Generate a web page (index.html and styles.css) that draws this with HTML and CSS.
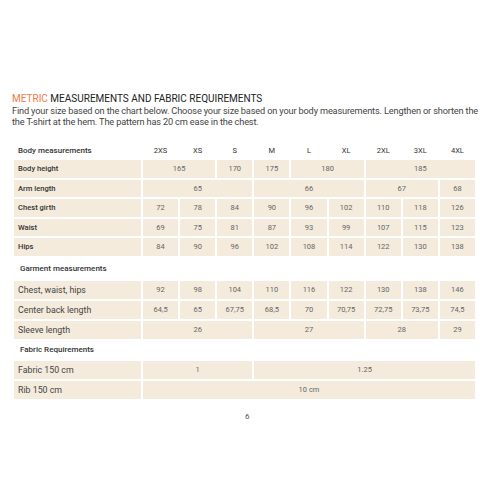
FILE: index.html
```html
<!DOCTYPE html>
<html lang="en">
<head>
  <meta charset="UTF-8">
  <title>Metric measurements</title>
  <link rel="stylesheet" href="styles.css">
</head>
<body>
  <div class="page">
    <h1 class="title"><span class="accent">METRIC</span> MEASUREMENTS AND FABRIC REQUIREMENTS</h1>
    <p class="intro">Find your size based on the chart below. Choose your size based on your body measurements. Lengthen or shorten the the T-shirt at the hem. The pattern has 20 cm ease in the chest.</p>

    <!-- Size header -->
    <div class="chart head">
      <div class="head-label">Body measurements</div>
      <div class="size">2XS</div>
      <div class="size">XS</div>
      <div class="size">S</div>
      <div class="size">M</div>
      <div class="size">L</div>
      <div class="size">XL</div>
      <div class="size">2XL</div>
      <div class="size">3XL</div>
      <div class="size">4XL</div>
    </div>

    <!-- Body measurements -->
    <div class="chart body-rows">
      <div class="label bold">Body height</div>
      <div class="val span2">165</div>
      <div class="val">170</div>
      <div class="val">175</div>
      <div class="val span2">180</div>
      <div class="val span3">185</div>

      <div class="label bold">Arm length</div>
      <div class="val span3">65</div>
      <div class="val span3">66</div>
      <div class="val span2">67</div>
      <div class="val">68</div>

      <div class="label bold">Chest girth</div>
      <div class="val">72</div><div class="val">78</div><div class="val">84</div>
      <div class="val">90</div><div class="val">96</div><div class="val">102</div>
      <div class="val">110</div><div class="val">118</div><div class="val">126</div>

      <div class="label bold">Waist</div>
      <div class="val">69</div><div class="val">75</div><div class="val">81</div>
      <div class="val">87</div><div class="val">93</div><div class="val">99</div>
      <div class="val">107</div><div class="val">115</div><div class="val">123</div>

      <div class="label bold">Hips</div>
      <div class="val">84</div><div class="val">90</div><div class="val">96</div>
      <div class="val">102</div><div class="val">108</div><div class="val">114</div>
      <div class="val">122</div><div class="val">130</div><div class="val">138</div>
    </div>

    <!-- Garment measurements -->
    <div class="section-title garment">Garment measurements</div>
    <div class="chart">
      <div class="label">Chest, waist, hips</div>
      <div class="val">92</div><div class="val">98</div><div class="val">104</div>
      <div class="val">110</div><div class="val">116</div><div class="val">122</div>
      <div class="val">130</div><div class="val">138</div><div class="val">146</div>

      <div class="label">Center back length</div>
      <div class="val">64,5</div><div class="val">65</div><div class="val">67,75</div>
      <div class="val">68,5</div><div class="val">70</div><div class="val">70,75</div>
      <div class="val">72,75</div><div class="val">73,75</div><div class="val">74,5</div>

      <div class="label">Sleeve length</div>
      <div class="val span3">26</div>
      <div class="val span3">27</div>
      <div class="val span2">28</div>
      <div class="val">29</div>
    </div>

    <!-- Fabric requirements -->
    <div class="section-title">Fabric Requirements</div>
    <div class="chart">
      <div class="label">Fabric 150 cm</div>
      <div class="val span3">1</div>
      <div class="val span6">1.25</div>

      <div class="label">Rib 150 cm</div>
      <div class="val span9">10 cm</div>
    </div>

    <div class="page-num">6</div>
  </div>
</body>
</html>
```

FILE: styles.css
```css
body {
  margin: 0;
  background: #fff;
  font-family: Roboto, "Liberation Sans", sans-serif;
  color: #333;
}

.page {
  padding: 93px 25px 0 14px;
}

.title {
  margin: 0 0 0 -2px;
  font-size: 10px;
  font-weight: 400;
  line-height: 12px;
  color: #222;
}

.accent {
  color: #ef7a47;
}

.intro {
  margin: 0 -8px 0 -2px;
  font-size: 9.2px;
  line-height: 11px;
  letter-spacing: -0.15px;
  color: #444;
}

.chart {
  display: grid;
  grid-template-columns: 127px repeat(9, 1fr);
  grid-auto-rows: 18px;
  gap: 2px;
  width: 461px;
}

.chart.head {
  grid-auto-rows: 16px;
  margin: 15px 0 2px;
}

.chart.body-rows {
  grid-auto-rows: 17.5px;
}

.head-label,
.size {
  display: flex;
  align-items: center;
  font-size: 8px;
  font-weight: 500;
  color: #333;
}

.head-label {
  padding-left: 4px;
}

.size {
  justify-content: center;
  font-size: 7.5px;
  font-weight: 400;
}

.label,
.val {
  display: flex;
  align-items: center;
  background: #f4ebdc;
}

.label {
  padding-left: 4px;
  font-size: 8.8px;
  color: #444;
}

.label.bold {
  font-size: 7.6px;
  font-weight: 500;
  color: #333;
}

.val {
  justify-content: center;
  font-size: 7.5px;
  color: #666;
}

.span2 { grid-column: span 2; }
.span3 { grid-column: span 3; }
.span6 { grid-column: span 6; }
.span9 { grid-column: span 9; }

.section-title {
  display: flex;
  align-items: center;
  height: 22px;
  padding-left: 6px;
  font-size: 8px;
  font-weight: 500;
  color: #333;
}

.section-title.garment {
  height: 25px;
}

.page-num {
  margin-top: 13px;
  padding-left: 231px;
  font-size: 8px;
  color: #555;
}
```
